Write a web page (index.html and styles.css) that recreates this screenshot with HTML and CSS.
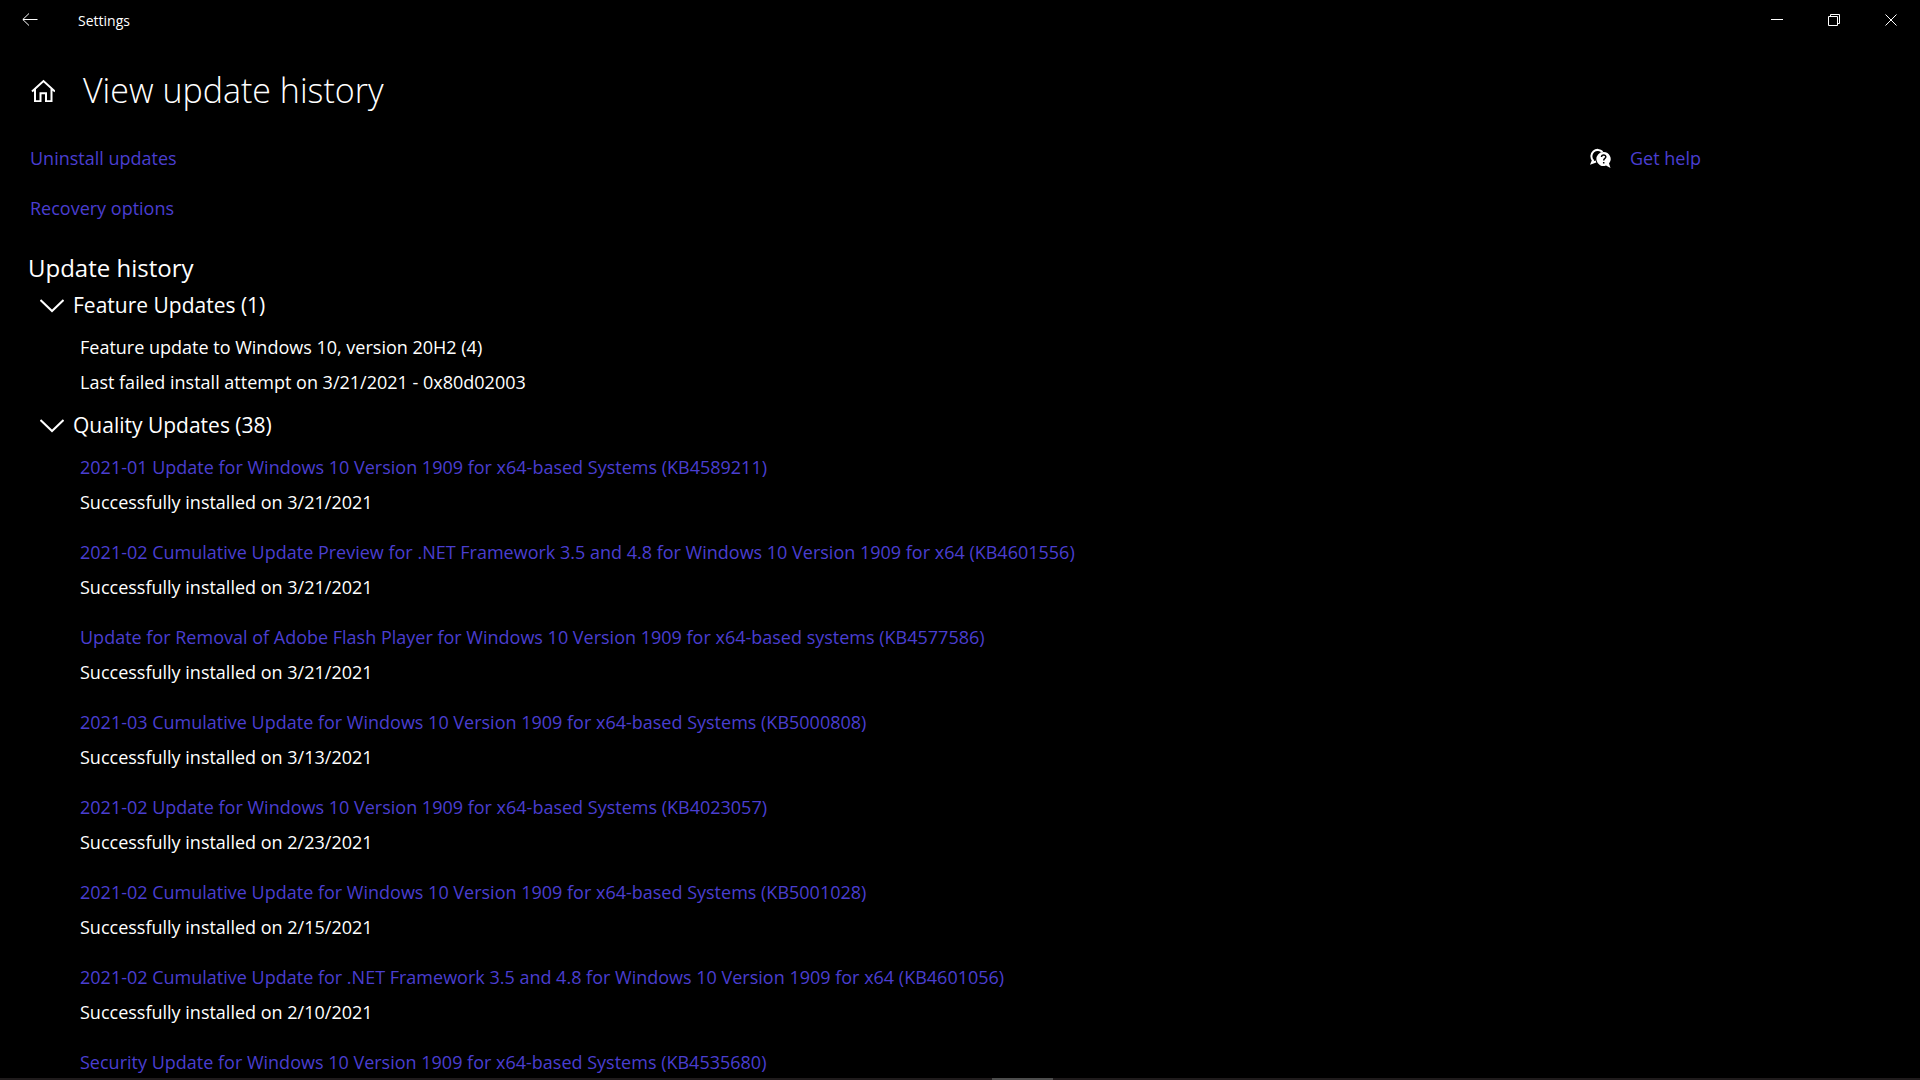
FILE: index.html
```html
<!DOCTYPE html>
<html lang="en">
<head>
    <meta charset="UTF-8">
    <meta name="viewport" content="width=device-width, initial-scale=1.0">
    <title>Settings</title>
    <link rel="stylesheet" href="styles.css">
</head>
<body>
    <header class="titlebar">
        <button class="titlebar-btn back" aria-label="Back">
            <svg width="16" height="14" viewBox="0 0 16 14"><path d="M7 .5.800 6.500 7 12.500M1 6.500h14.500"/></svg>
        </button>
        <span class="app-name">Settings</span>
        <button class="titlebar-btn" aria-label="Minimize">
            <svg width="13" height="12" viewBox="0 0 13 12"><path d="M0 5.500h12"/></svg>
        </button>
        <button class="titlebar-btn" aria-label="Restore">
            <svg width="13" height="12" viewBox="0 0 13 12"><path d="M.5 2.500h9v9h-9zM2.500 2.500v-2h9v9h-2"/></svg>
        </button>
        <button class="titlebar-btn" aria-label="Close">
            <svg width="13" height="12" viewBox="0 0 13 12"><path d="M.5 .5l11 11M11.500 .5l-11 11"/></svg>
        </button>
    </header>

    <div class="page-title">
        <button class="home" aria-label="Home">
            <svg width="24" height="24" viewBox="0 0 24 24"><path d="M1 13.500 12.500 3 24 13.500M4 11v12.200h5.500v-8h5.500v8h5.500V11"/></svg>
        </button>
        <h1>View update history</h1>
    </div>

    <div class="columns">
        <main class="content">
            <nav class="actions">
                <a href="#">Uninstall updates</a>
                <a href="#">Recovery options</a>
            </nav>

            <h2>Update history</h2>

            <details class="group" open>
                <summary>
                    <svg width="24" height="18" viewBox="0 0 24 18"><path d="M.5 4 12 15 23.500 4"/></svg>
                    Feature Updates (1)
                </summary>
                <ul class="updates">
                    <li><span>Feature update to Windows 10, version 20H2 (4)</span><p>Last failed install attempt on 3/21/2021 - 0x80d02003</p></li>
                </ul>
            </details>

            <details class="group" open>
                <summary>
                    <svg width="24" height="18" viewBox="0 0 24 18"><path d="M.5 4 12 15 23.500 4"/></svg>
                    Quality Updates (38)
                </summary>
                <ul class="updates">
                    <li><a href="#">2021-01 Update for Windows 10 Version 1909 for x64-based Systems (KB4589211)</a><p>Successfully installed on 3/21/2021</p></li>
                    <li><a href="#">2021-02 Cumulative Update Preview for .NET Framework 3.5 and 4.8 for Windows 10 Version 1909 for x64 (KB4601556)</a><p>Successfully installed on 3/21/2021</p></li>
                    <li><a href="#">Update for Removal of Adobe Flash Player for Windows 10 Version 1909 for x64-based systems (KB4577586)</a><p>Successfully installed on 3/21/2021</p></li>
                    <li><a href="#">2021-03 Cumulative Update for Windows 10 Version 1909 for x64-based Systems (KB5000808)</a><p>Successfully installed on 3/13/2021</p></li>
                    <li><a href="#">2021-02 Update for Windows 10 Version 1909 for x64-based Systems (KB4023057)</a><p>Successfully installed on 2/23/2021</p></li>
                    <li><a href="#">2021-02 Cumulative Update for Windows 10 Version 1909 for x64-based Systems (KB5001028)</a><p>Successfully installed on 2/15/2021</p></li>
                    <li><a href="#">2021-02 Cumulative Update for .NET Framework 3.5 and 4.8 for Windows 10 Version 1909 for x64 (KB4601056)</a><p>Successfully installed on 2/10/2021</p></li>
                    <li><a href="#">Security Update for Windows 10 Version 1909 for x64-based Systems (KB4535680)</a></li>
                </ul>
            </details>
        </main>

        <aside class="help">
            <svg width="21" height="21" viewBox="0 0 21 21">
                <path class="bubble-line" d="M3 12.500A6 6 0 1 1 12.500 4M3.300 11.500 1.800 15l4.200-1.500"/>
                <path class="bubble-fill" d="M13.500 4a7 7 0 1 0 2.500 13.500l4.500 2.500-1.500-4.500A7 7 0 0 0 13.500 4z"/>
                <path class="question" d="M11.500 9c0-3 4.500-2.500 4.300 0-.2 1.500-2.100 1.500-2.100 3.500M13.700 14v1.500"/>
            </svg>
            <a href="#">Get help</a>
        </aside>
    </div>

    <!-- hidden taskbar edge -->
    <div class="taskbar"><div class="taskbar-active"></div></div>
</body>
</html>
```
FILE: styles.css
```css
* {
    box-sizing: border-box;
}
body {
    margin: 0;
    height: 100vh;
    overflow: hidden;
    background: #000;
    color: #fff;
    font-family: "Open Sans", "Noto Sans", sans-serif;
    font-size: 18px;
    line-height: 35px;
}
h1, h2, p, ul {
    margin: 0;
    padding: 0;
    font-weight: 400;
}
a {
    color: #4a3ed0;
    text-decoration: none;
}
button {
    display: flex;
    align-items: center;
    justify-content: center;
    padding: 0;
    border: none;
    background: none;
    cursor: pointer;
}
svg {
    flex: none;
    fill: none;
    stroke: #fff;
}
.titlebar {
    display: flex;
    align-items: center;
    height: 40px;
}
.titlebar-btn {
    width: 57px;
    height: 40px;
}
.back {
    width: 60px;
}
.app-name {
    flex: 1;
    padding-left: 18px;
    font-size: 14px;
}
.page-title {
    display: flex;
    align-items: center;
    gap: 28px;
    height: 101px;
    padding: 0 0 2px 31px;
}
.home svg, .group svg {
    stroke-width: 2;
}
.page-title h1 {
    font-size: 34px;
    font-weight: 300;
    line-height: 48px;
}
.columns {
    display: flex;
}
.content {
    flex: 1;
    padding-left: 28px;
}
.actions {
    display: flex;
    flex-direction: column;
    align-items: flex-start;
    gap: 15px;
    margin-bottom: 30px;
    padding-left: 2px;
}
h2 {
    font-size: 24px;
    line-height: 24px;
}
.group summary {
    display: flex;
    align-items: center;
    gap: 9px;
    padding-left: 12px;
    font-size: 21px;
    line-height: 50px;
    cursor: pointer;
}
.updates {
    display: flex;
    flex-direction: column;
    gap: 15px;
    padding-left: 52px;
    list-style: none;
}
.help {
    display: flex;
    align-items: center;
    align-self: flex-start;
    gap: 19px;
    width: 330px;
}
.bubble-line {
    stroke-width: 2;
}
.bubble-fill {
    fill: #fff;
    stroke: none;
}
.question {
    stroke: #000;
    stroke-width: 1.5;
}
.taskbar {
    position: fixed;
    left: 0;
    right: 0;
    bottom: 0;
    height: 2px;
    padding-left: 992px;
    background: #1f1b1c;
}
.taskbar-active {
    width: 61px;
    height: 2px;
    background: #4d4d4d;
}
```
